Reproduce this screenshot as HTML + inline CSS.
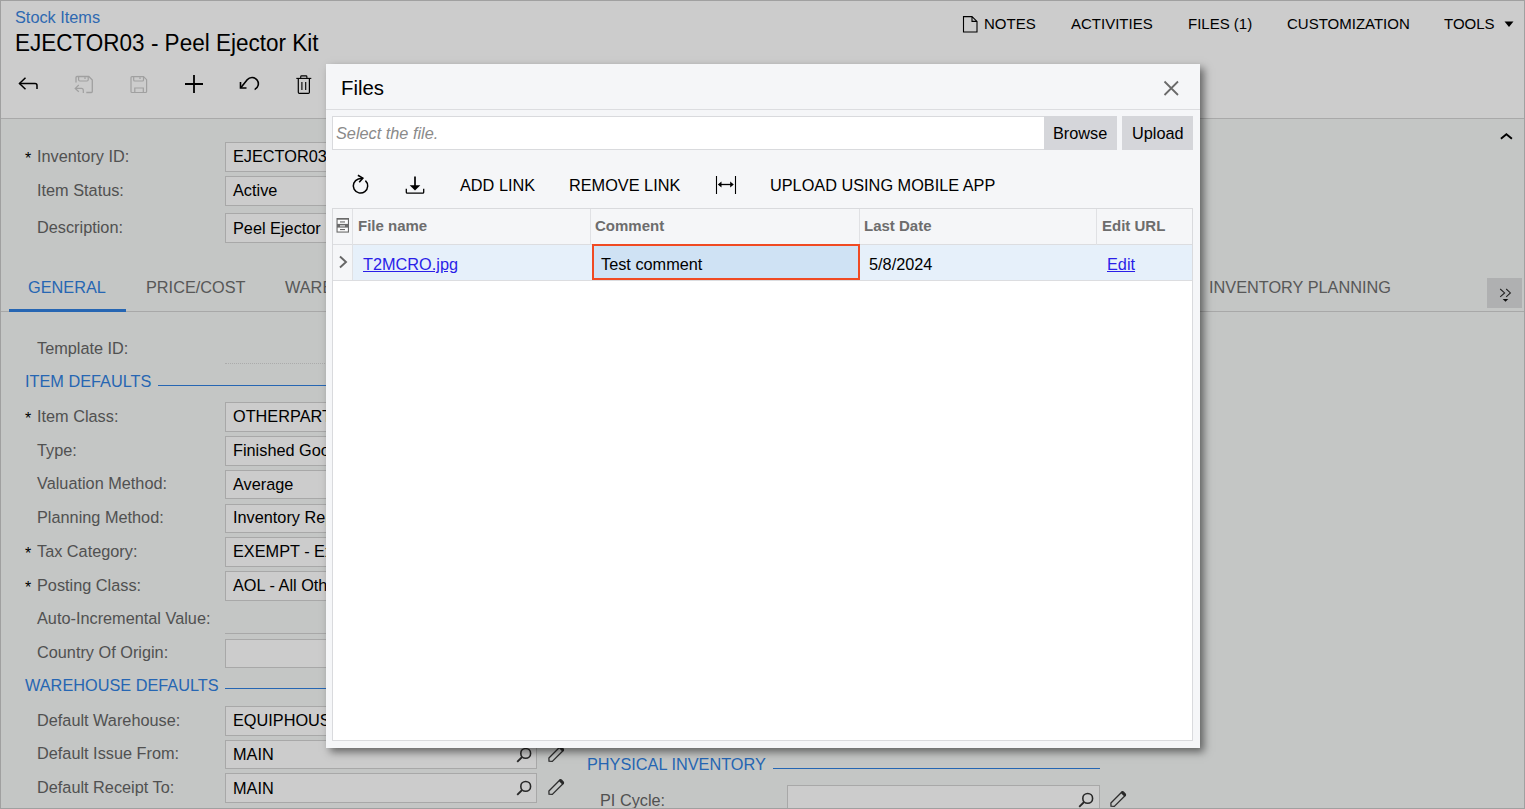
<!DOCTYPE html>
<html><head><meta charset="utf-8">
<style>
*{box-sizing:border-box;margin:0;padding:0}
html,body{width:1525px;height:809px;overflow:hidden;background:#fff}
body{position:relative;font-family:"Liberation Sans",sans-serif;color:#000}
.a{position:absolute;white-space:nowrap;line-height:1}
#page{position:absolute;left:0;top:0;width:1525px;height:809px;background:#fff;overflow:hidden}
#pb{position:absolute;left:0;top:0;width:1525px;height:809px;border:1px solid #c8c8c8}
#hdr{position:absolute;left:0;top:0;width:1525px;height:119px;background:#fff;border-bottom:1px solid #d4d4d4}
#form{position:absolute;left:0;top:119px;width:1525px;height:690px;background:#f5f8f7}
.lbl{position:absolute;font-size:16.3px;line-height:1;color:#666;white-space:nowrap}
.req{position:absolute;font-size:16px;line-height:1;color:#000}
.inp{position:absolute;background:#fff;border:1px solid #d3d3d3;height:29px}
.inp span{position:absolute;left:7px;top:5px;font-size:16.3px;line-height:1;color:#000}
.blue{color:#3080e0}
.sec{position:absolute;font-size:16.3px;line-height:1;color:#3080e0;white-space:nowrap}
.secl{position:absolute;height:1px;background:#3080e0}
.tab{position:absolute;font-size:16.3px;line-height:1;color:#6e6e6e;white-space:nowrap}
.menu{position:absolute;font-size:15px;line-height:1;color:#000;white-space:nowrap}
#ov{position:absolute;left:0;top:0;width:1525px;height:809px;background:rgba(0,0,0,0.2)}
#dlg{position:absolute;left:326px;top:64px;width:874px;height:684px;background:#f5f6f8;box-shadow:4px 4px 8px rgba(0,0,0,0.5)}
</style></head><body>
<div id="page">
  <div id="hdr">
    <div class="a blue" style="left:15px;top:9px;font-size:16.3px;color:#3a84de">Stock Items</div>
    <div class="a" style="left:15px;top:33px;font-size:22.5px;color:#000;transform:scaleY(1.07);transform-origin:0 18px">EJECTOR03 - Peel Ejector Kit</div>
    <!-- top menu -->
    <svg class="a" style="left:961px;top:15px" width="18" height="19" viewBox="0 0 18 19"><path d="M2.5 1.6 H11 L16 6.4 V17 H2.5 Z M11 1.6 V6.4 H16" fill="none" stroke="#000" stroke-width="1.1"/></svg>
    <div class="menu" style="left:984px;top:16px">NOTES</div>
    <div class="menu" style="left:1071px;top:16px">ACTIVITIES</div>
    <div class="menu" style="left:1188px;top:16px">FILES (1)</div>
    <div class="menu" style="left:1287px;top:16px">CUSTOMIZATION</div>
    <div class="menu" style="left:1444px;top:16px">TOOLS</div>
    <svg class="a" style="left:1504px;top:21px" width="10" height="7" viewBox="0 0 10 7"><path d="M0.5 0.5 H9.5 L5 6 Z" fill="#000"/></svg>
    <!-- toolbar icons -->
    <svg class="a" style="left:15px;top:72px" width="28" height="22" viewBox="15 72 28 22"><path d="M19.5 83.5 H35 Q37 83.5 37 85.5 V89" fill="none" stroke="#000" stroke-width="1.5"/><path d="M25.5 77.8 L19.5 83.5 L25.5 89.2" fill="none" stroke="#000" stroke-width="1.5"/></svg>
    <svg class="a" style="left:70px;top:70px" width="30" height="28" viewBox="70 70 30 28"><path d="M76 82.5 V77.5 Q76 76.5 77 76.5 H88.8 L92.3 80 V91.5 Q92.3 92.5 91.3 92.5 H86.3" fill="none" stroke="#c9c9c9" stroke-width="1.3"/><path d="M78.6 76.5 V79.8 Q78.6 81 79.8 81 H87 Q88.2 81 88.2 79.8 V76.5" fill="none" stroke="#c9c9c9" stroke-width="1.2"/><path d="M85 77.2 V79" stroke="#c9c9c9" stroke-width="1.3"/><path d="M78.8 85 L75.2 88.4 L78.8 91.8 M75.2 88.4 H81.5 Q83.3 88.4 83.3 90.4 V93" fill="none" stroke="#c9c9c9" stroke-width="1.2"/></svg>
    <svg class="a" style="left:125px;top:70px" width="30" height="28" viewBox="125 70 30 28"><path d="M131 77.5 Q131 76.6 132 76.6 H143.5 L146.6 79.7 V91.6 Q146.6 92.5 145.6 92.5 H132 Q131 92.5 131 91.6 Z" fill="none" stroke="#c9c9c9" stroke-width="1.2"/><path d="M133.7 76.6 V80 Q133.7 81 134.7 81 H142.5 Q143.5 81 143.5 80 V76.6" fill="none" stroke="#c9c9c9" stroke-width="1.2"/><path d="M140 77.2 V79" stroke="#c9c9c9" stroke-width="1.3"/><path d="M134.8 92.5 V88 H143.3 V92.5" fill="none" stroke="#c9c9c9" stroke-width="1.2"/></svg>
    <svg class="a" style="left:180px;top:70px" width="28" height="28" viewBox="180 70 28 28"><path d="M185 84 H203 M194 75 V93" stroke="#000" stroke-width="1.8"/></svg>
    <svg class="a" style="left:235px;top:72px" width="28" height="22" viewBox="235 72 28 22"><path d="M240.5 82 V88 H246.5" fill="none" stroke="#000" stroke-width="1.6"/><path d="M241 87.5 L247.2 79.8 A6.3 6.3 0 1 1 254.6 89.6" fill="none" stroke="#000" stroke-width="1.6"/></svg>
    <svg class="a" style="left:290px;top:70px" width="28" height="28" viewBox="290 70 28 28"><path d="M296.3 78.4 H311.3" stroke="#000" stroke-width="1.1"/><path d="M300.7 78.4 V76.8 Q300.7 75.9 301.6 75.9 H306 Q306.9 75.9 306.9 76.8 V78.4" fill="none" stroke="#000" stroke-width="1.1"/><path d="M298.3 78.4 V92.3 Q298.3 93.4 299.4 93.4 H308.3 Q309.4 93.4 309.4 92.3 V78.4" fill="none" stroke="#000" stroke-width="1.2"/><path d="M301.9 82 V90 M305.7 82 V90" stroke="#000" stroke-width="1.1"/></svg>
  </div>
  <div id="form"></div>
<div class="req" style="left:25px;top:151px">*</div>
<div class="lbl" style="left:37px;top:148px">Inventory ID:</div>
<div class="inp" style="left:225px;top:142px;width:312px;height:30px"><span style="top:5px">EJECTOR03</span></div>
<div class="lbl" style="left:37px;top:182px">Item Status:</div>
<div class="inp" style="left:225px;top:176px;width:312px;height:30px"><span style="top:5px">Active</span></div>
<div class="lbl" style="left:37px;top:219px">Description:</div>
<div class="inp" style="left:225px;top:213px;width:312px;height:30px"><span style="top:6px">Peel Ejector Kit</span></div>
<div class="lbl" style="left:37px;top:340px">Template ID:</div>
<div style="position:absolute;left:225px;top:363px;width:312px;height:1px;border-top:1px dotted #d6d6d6"></div>
<div class="req" style="left:25px;top:411px">*</div>
<div class="lbl" style="left:37px;top:408px">Item Class:</div>
<div class="inp" style="left:225px;top:402px;width:312px;height:30px"><span style="top:5px">OTHERPARTS</span></div>
<div class="lbl" style="left:37px;top:442px">Type:</div>
<div class="inp" style="left:225px;top:436px;width:312px;height:30px"><span style="top:5px">Finished Good</span></div>
<div class="lbl" style="left:37px;top:475px">Valuation Method:</div>
<div class="inp" style="left:225px;top:470px;width:312px;height:29px"><span style="top:5px">Average</span></div>
<div class="lbl" style="left:37px;top:509px">Planning Method:</div>
<div class="inp" style="left:225px;top:504px;width:312px;height:29px"><span style="top:4px">Inventory Replenishment</span></div>
<div class="req" style="left:25px;top:546px">*</div>
<div class="lbl" style="left:37px;top:543px">Tax Category:</div>
<div class="inp" style="left:225px;top:537px;width:312px;height:30px"><span style="top:5px">EXEMPT - Exempt</span></div>
<div class="req" style="left:25px;top:580px">*</div>
<div class="lbl" style="left:37px;top:577px">Posting Class:</div>
<div class="inp" style="left:225px;top:571px;width:312px;height:30px"><span style="top:5px">AOL - All Other</span></div>
<div class="lbl" style="left:37px;top:610px">Auto-Incremental Value:</div>
<div style="position:absolute;left:225px;top:633px;width:312px;height:1px;background:#d3d3d3"></div>
<div class="lbl" style="left:37px;top:644px">Country Of Origin:</div>
<div class="inp" style="left:225px;top:639px;width:312px;height:29px"></div>
<div class="lbl" style="left:37px;top:712px">Default Warehouse:</div>
<div class="inp" style="left:225px;top:706px;width:312px;height:30px"><span style="top:5px">EQUIPHOUSE</span><svg style="position:absolute;left:289px;top:6px" width="18" height="18" viewBox="0 0 18 18"><circle cx="10.7" cy="6.4" r="4.9" fill="none" stroke="#333" stroke-width="1.6"/><path d="M7.1 10 L2.2 14.9" stroke="#333" stroke-width="1.8"/></svg></div>
<svg style="position:absolute;left:546px;top:711px" width="20" height="20" viewBox="0 0 20 20"><path d="M3 16.2 L2.9 13 L13.6 2.3 Q14.6 1.3 15.6 2.3 L17 3.7 Q18 4.7 17 5.7 L6.3 16.4 Z" fill="none" stroke="#3a3a3a" stroke-width="1.3"/><path d="M14.2 2.6 L16.7 5.1" stroke="#333" stroke-width="2.6" stroke-linecap="round"/></svg>
<div class="lbl" style="left:37px;top:745px">Default Issue From:</div>
<div class="inp" style="left:225px;top:740px;width:312px;height:29px"><span style="top:5px">MAIN</span><svg style="position:absolute;left:289px;top:6px" width="18" height="18" viewBox="0 0 18 18"><circle cx="10.7" cy="6.4" r="4.9" fill="none" stroke="#333" stroke-width="1.6"/><path d="M7.1 10 L2.2 14.9" stroke="#333" stroke-width="1.8"/></svg></div>
<svg style="position:absolute;left:546px;top:745px" width="20" height="20" viewBox="0 0 20 20"><path d="M3 16.2 L2.9 13 L13.6 2.3 Q14.6 1.3 15.6 2.3 L17 3.7 Q18 4.7 17 5.7 L6.3 16.4 Z" fill="none" stroke="#3a3a3a" stroke-width="1.3"/><path d="M14.2 2.6 L16.7 5.1" stroke="#333" stroke-width="2.6" stroke-linecap="round"/></svg>
<div class="lbl" style="left:37px;top:779px">Default Receipt To:</div>
<div class="inp" style="left:225px;top:773px;width:312px;height:30px"><span style="top:6px">MAIN</span><svg style="position:absolute;left:289px;top:6px" width="18" height="18" viewBox="0 0 18 18"><circle cx="10.7" cy="6.4" r="4.9" fill="none" stroke="#333" stroke-width="1.6"/><path d="M7.1 10 L2.2 14.9" stroke="#333" stroke-width="1.8"/></svg></div>
<svg style="position:absolute;left:546px;top:778px" width="20" height="20" viewBox="0 0 20 20"><path d="M3 16.2 L2.9 13 L13.6 2.3 Q14.6 1.3 15.6 2.3 L17 3.7 Q18 4.7 17 5.7 L6.3 16.4 Z" fill="none" stroke="#3a3a3a" stroke-width="1.3"/><path d="M14.2 2.6 L16.7 5.1" stroke="#333" stroke-width="2.6" stroke-linecap="round"/></svg>
<!-- collapse caret -->
<svg style="position:absolute;left:1498px;top:130px" width="16" height="12" viewBox="0 0 16 12"><path d="M2.9 8.8 L8.4 4.2 L13.9 8.8" fill="none" stroke="#000" stroke-width="1.9"/></svg>
<!-- tabs -->
<div class="tab blue" style="left:28px;top:279px;color:#3080e0">GENERAL</div>
<div class="tab" style="left:146px;top:279px">PRICE/COST</div>
<div class="tab" style="left:285px;top:279px">WAREHOUSES</div>
<div class="tab" style="left:1209px;top:279px">INVENTORY PLANNING</div>
<div style="position:absolute;left:1px;top:311px;width:1523px;height:1px;background:#d3d3d3"></div>
<div style="position:absolute;left:9px;top:309px;width:117px;height:3px;background:#3080e0"></div>
<div style="position:absolute;left:1487px;top:278px;width:35px;height:30px;background:#dbdcde"></div>
<svg style="position:absolute;left:1496px;top:285px" width="18" height="18" viewBox="0 0 18 18"><path d="M4.2 4 L8.6 7.9 L4.2 11.8 M10.2 4 L14.4 7.9 L10.2 11.8" fill="none" stroke="#2a2a2a" stroke-width="1.05"/><path d="M6.7 14 H12.3 L9.5 16.8 Z" fill="#111"/></svg>
<!-- sections -->
<div class="sec" style="left:25px;top:373px">ITEM DEFAULTS</div>
<div class="secl" style="left:158px;top:385px;width:400px"></div>
<div class="sec" style="left:25px;top:677px">WAREHOUSE DEFAULTS</div>
<div class="secl" style="left:225px;top:688px;width:400px"></div>
<div class="sec" style="left:587px;top:756px">PHYSICAL INVENTORY</div>
<div class="secl" style="left:773px;top:768px;width:327px"></div>
<div class="lbl" style="left:600px;top:792px">PI Cycle:</div>
<div class="inp" style="left:787px;top:785px;width:313px"><svg style="position:absolute;left:289px;top:6px" width="18" height="18" viewBox="0 0 18 18"><circle cx="10.7" cy="6.4" r="4.9" fill="none" stroke="#333" stroke-width="1.6"/><path d="M7.1 10 L2.2 14.9" stroke="#333" stroke-width="1.8"/></svg></div>
<svg style="position:absolute;left:1108px;top:790px" width="20" height="20" viewBox="0 0 20 20"><path d="M3 16.2 L2.9 13 L13.6 2.3 Q14.6 1.3 15.6 2.3 L17 3.7 Q18 4.7 17 5.7 L6.3 16.4 Z" fill="none" stroke="#3a3a3a" stroke-width="1.3"/><path d="M14.2 2.6 L16.7 5.1" stroke="#333" stroke-width="2.6" stroke-linecap="round"/></svg>
<div id="pb"></div>
<div id="ov"></div>
<div id="dlg">
<div class="a" style="left:15px;top:14px;font-size:20.4px;color:#000">Files</div>
<svg class="a" style="left:836px;top:15px" width="18" height="18" viewBox="0 0 18 18"><path d="M2.5 2.5 L16 16 M16 2.5 L2.5 16" stroke="#6a6a6a" stroke-width="1.8"/></svg>
<div style="position:absolute;left:0;top:45px;width:874px;height:1px;background:#dcdde0"></div>
<div style="position:absolute;left:6px;top:52px;width:712px;height:34px;background:#fff;border:1px solid #d9dadd;border-right:0"></div>
<div class="a" style="left:10px;top:61px;font-size:16.3px;font-style:italic;color:#8a8a8a">Select the file.</div>
<div style="position:absolute;left:718px;top:52px;width:73px;height:34px;background:#d5d6da"></div>
<div class="a" style="left:727px;top:61px;font-size:16.3px;color:#000">Browse</div>
<div style="position:absolute;left:796px;top:52px;width:71px;height:34px;background:#d5d6da"></div>
<div class="a" style="left:806px;top:61px;font-size:16.3px;color:#000">Upload</div>
<!-- toolbar -->
<svg class="a" style="left:19px;top:106px" width="30" height="28" viewBox="345 170 30 28"><path d="M365.4 180.6 A7.2 7.2 0 1 1 358.3 179 L362.4 178.3" fill="none" stroke="#000" stroke-width="1.5"/><path d="M357.9 175.3 L362.8 178.1 L359.2 182.2" fill="none" stroke="#000" stroke-width="1.6" stroke-linejoin="miter"/></svg>
<svg class="a" style="left:74px;top:106px" width="30" height="28" viewBox="400 170 30 28"><path d="M415 176.5 V186" stroke="#000" stroke-width="1.7"/><path d="M409.7 185.2 H420.3 L415 190.6 Z" fill="#000"/><path d="M406.3 188.8 V192.3 Q406.3 193.2 407.2 193.2 H422.8 Q423.7 193.2 423.7 192.3 V188.8" fill="none" stroke="#000" stroke-width="1.3"/></svg>
<div class="a" style="left:134px;top:113px;font-size:16.3px;color:#000">ADD LINK</div>
<div class="a" style="left:243px;top:113px;font-size:16.3px;color:#000">REMOVE LINK</div>
<svg class="a" style="left:379px;top:106px" width="40" height="30" viewBox="705 170 40 30"><path d="M716.5 176 V194 M735.5 176 V194" stroke="#000" stroke-width="1.1"/><path d="M720 184.5 H732" stroke="#000" stroke-width="1.3"/><path d="M717.8 184.5 L721.5 181.5 V187.5 Z M733.8 184.5 L730.2 181.5 V187.5 Z" fill="#000"/></svg>
<div class="a" style="left:444px;top:113px;font-size:16.3px;color:#000">UPLOAD USING MOBILE APP</div>
<!-- grid -->
<div id="grid" style="position:absolute;left:6px;top:144px;width:861px;height:533px;background:#fff;border:1px solid #d9dadd">
  <div style="position:absolute;left:0;top:0;width:859px;height:36px;background:#f5f6f8;border-bottom:1px solid #dcdde0"></div>
  <div style="position:absolute;left:0;top:36px;width:859px;height:36px;background:#e6f0fa;border-bottom:1px solid #dcdde0"></div>
  <div style="position:absolute;left:0;top:36px;width:19px;height:36px;background:#f5f6f8;border-bottom:1px solid #dcdde0"></div>
  <div style="position:absolute;left:19px;top:0;width:1px;height:71px;background:#e0e1e4"></div>
  <div style="position:absolute;left:257px;top:0;width:1px;height:36px;background:#e0e1e4"></div>
  <div style="position:absolute;left:526px;top:0;width:1px;height:36px;background:#e0e1e4"></div>
  <div style="position:absolute;left:763px;top:0;width:1px;height:36px;background:#e0e1e4"></div>
  <svg style="position:absolute;left:3px;top:9px" width="14" height="16" viewBox="0 0 14 16"><rect x="0.5" y="0" width="12.5" height="14.6" fill="#6a6a6a"/><rect x="1.6" y="1.7" width="10.3" height="4.2" fill="#fdfdfd"/><rect x="1.6" y="9.6" width="10.3" height="3.9" fill="#fdfdfd"/><rect x="4" y="7.2" width="5" height="1.3" fill="#d8d8d8"/><rect x="4" y="3.4" width="5" height="1.1" fill="#6a6a6a"/><rect x="4" y="11" width="5" height="1.1" fill="#6a6a6a"/></svg>
  <div class="a" style="left:25px;top:9px;font-size:15px;font-weight:bold;color:#6d6d6d">File name</div>
  <div class="a" style="left:262px;top:9px;font-size:15px;font-weight:bold;color:#6d6d6d">Comment</div>
  <div class="a" style="left:531px;top:9px;font-size:15px;font-weight:bold;color:#6d6d6d">Last Date</div>
  <div class="a" style="left:769px;top:9px;font-size:15px;font-weight:bold;color:#6d6d6d">Edit URL</div>
  <svg style="position:absolute;left:4px;top:46px" width="12" height="14" viewBox="0 0 12 14"><path d="M3 1.5 L9 7 L3 12.5" fill="none" stroke="#666" stroke-width="1.9"/></svg>
  <div class="a" style="left:30px;top:47px;font-size:16.3px;color:#2a1ee8;text-decoration:underline">T2MCRO.jpg</div>
  <div style="position:absolute;left:259px;top:35px;width:268px;height:36px;background:#cfe2f4;border:2px solid #f04a22"></div>
  <div class="a" style="left:268px;top:47px;font-size:16.3px;color:#000">Test comment</div>
  <div class="a" style="left:536px;top:47px;font-size:16.3px;color:#000">5/8/2024</div>
  <div class="a" style="left:774px;top:47px;font-size:16.3px;color:#2a1ee8;text-decoration:underline">Edit</div>
</div>
</div>
</body></html>
